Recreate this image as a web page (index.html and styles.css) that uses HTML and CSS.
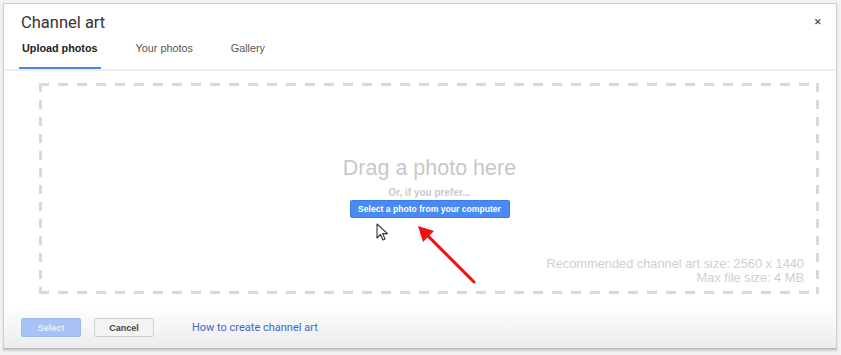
FILE: index.html
```html
<!DOCTYPE html>
<html lang="en">
<head>
  <meta charset="UTF-8" />
  <title>Channel art</title>
  <link rel="stylesheet" href="styles.css">
</head>
<body>

  <div class="dialog">
    <div class="header">
      <h1>Channel art</h1>
      <span class="close">&#x2715;</span>
    </div>

    <div class="tabs">
      <span class="tab active">Upload photos</span>
      <span class="tab">Your photos</span>
      <span class="tab">Gallery</span>
    </div>

    <div class="content">
      <div class="dropzone">
        <div class="drop-center">
          <div class="drag">Drag a photo here</div>
          <div class="prefer">Or, if you prefer...</div>
          <button class="pick">Select a photo from your computer</button>
        </div>
        <div class="hint">
          <div>Recommended channel art size: 2560 x 1440</div>
          <div>Max file size: 4 MB</div>
        </div>
      </div>
    </div>

    <div class="footer">
      <button class="btn btn-select">Select</button>
      <button class="btn btn-cancel">Cancel</button>
      <a href="#" class="help">How to create channel art</a>
    </div>
  </div>

  <!-- annotation overlays -->
  <svg class="cursor" width="14" height="20" viewBox="0 0 14 20">
    <path d="M1 1 L1 15 L4.5 11.5 L7 17 L9 16 L6.6 10.6 L11.5 10.6 Z" fill="#fff" stroke="#333" stroke-width="1.1" stroke-linejoin="round"/>
  </svg>
  <svg class="arrow" width="70" height="70" viewBox="0 0 70 70">
    <line x1="62" y1="60" x2="12" y2="10" stroke="#f01010" stroke-width="3" stroke-linecap="round"/>
    <path d="M6 4 L22 9 L11 20 Z" fill="#f01010"/>
  </svg>

</body>
</html>
```

FILE: styles.css
```css
body {
  margin: 0;
  padding: 3px 4px 5px 3px;
  background: #f3f3f3;
  font-family: Roboto, "Liberation Sans", sans-serif;
}
.dialog {
  height: 345px;
  background: #fff;
  border: 1px solid #cfcfcf;
  display: flex;
  flex-direction: column;
  box-shadow: 0 1px 2px rgba(0,0,0,0.15);
}
.header {
  display: flex;
  justify-content: space-between;
  align-items: center;
  padding: 5px 14px 0 17px;
  height: 26px;
}
h1 {
  margin: 0;
  font-size: 16.5px;
  font-weight: normal;
  color: #333;
}
.close {
  font-size: 9px;
  color: #555;
  font-weight: bold;
}
.tabs {
  display: flex;
  padding-left: 15px;
  height: 31px;
  border-bottom: 2px solid #eee;
  box-sizing: border-box;
  margin-top: 5px;
  font-family: "Liberation Sans", sans-serif;
}
.tab {
  font-size: 10.8px;
  color: #555;
  padding: 2px 3px 0;
  margin-right: 32px;
  box-sizing: border-box;
}
.tab.active {
  font-weight: bold;
  color: #222;
  border-bottom: 2px solid #4a86e8;
}
.content {
  flex: 1;
  padding: 12px 17px 10px 35px;
}
.dropzone {
  height: 100%;
  box-sizing: border-box;
  position: relative;
  background:
    repeating-linear-gradient(90deg, #d9d9d9 0 10px, transparent 10px 19px) top left / 100% 3px no-repeat,
    repeating-linear-gradient(90deg, #d9d9d9 0 10px, transparent 10px 19px) bottom left / 100% 3px no-repeat,
    repeating-linear-gradient(180deg, #d9d9d9 0 9px, transparent 9px 17px) top left / 3px 100% no-repeat,
    repeating-linear-gradient(180deg, #d9d9d9 0 9px, transparent 9px 17px) top right / 3px 100% no-repeat;
  display: flex;
  flex-direction: column;
  align-items: center;
  padding-top: 73px;
  font-family: "Liberation Sans", sans-serif;
}
.drop-center {
  display: flex;
  flex-direction: column;
  align-items: center;
  margin-left: 1px;
}
.drag {
  font-size: 21.5px;
  color: #c8c8c8;
}
.prefer {
  font-size: 10px;
  font-weight: bold;
  color: #cacaca;
  margin-top: 6px;
}
.pick {
  margin-top: 2px;
  background: #4a8af4;
  color: #fff;
  border: 1px solid #3b7de8;
  border-radius: 2px;
  font-family: "Liberation Sans", sans-serif;
  font-size: 8.6px;
  font-weight: bold;
  width: 160px;
  height: 18px;
  padding: 0;
}
.hint {
  align-self: flex-end;
  margin-top: auto;
  margin-bottom: 9px;
  margin-right: 15px;
  text-align: right;
  font-size: 12.8px;
  line-height: 14px;
  color: #cfcfcf;
}
.footer {
  height: 44px;
  display: flex;
  align-items: center;
  padding: 0 17px;
  background: linear-gradient(#fff, #ececec);
  border-bottom: 1px solid #bbb;
}
.btn {
  width: 60px;
  height: 19px;
  font-family: "Liberation Sans", sans-serif;
  font-size: 9px;
  font-weight: bold;
  border-radius: 2px;
  padding: 0;
  margin-right: 13px;
  margin-top: 3px;
}
.btn-select {
  background: #a5c3f7;
  color: #e8f0ff;
  border: 1px solid #9dbcf2;
}
.btn-cancel {
  background: #f3f3f3;
  color: #444;
  border: 1px solid #d0d0d0;
}
.help {
  margin-left: 25px;
  margin-top: 2px;
  font-size: 11px;
  color: #3a68c8;
  text-decoration: none;
}
.cursor {
  position: absolute;
  left: 376px;
  top: 223px;
}
.arrow {
  position: absolute;
  left: 412px;
  top: 222px;
}
```
